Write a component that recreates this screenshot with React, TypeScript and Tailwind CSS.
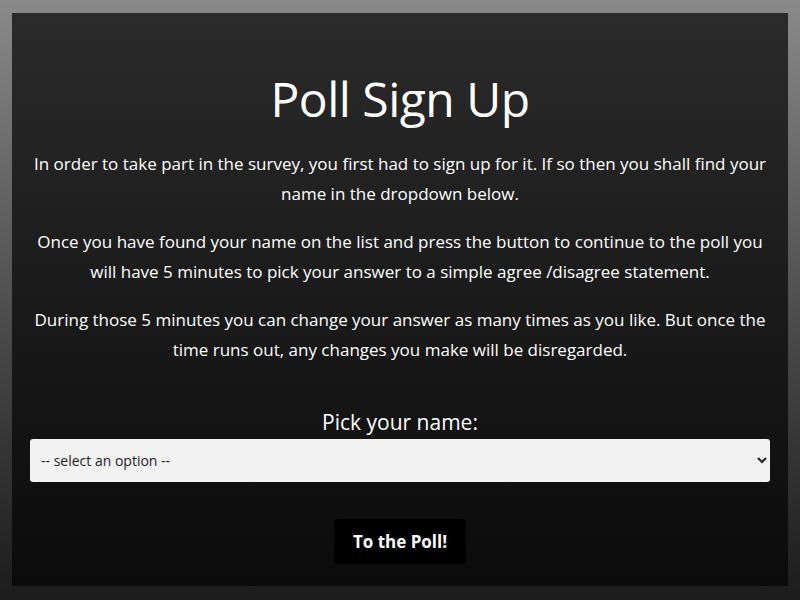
export default function App() {
  return (
    <div className="min-h-screen bg-gradient-to-b from-[#8a8a8a] to-[#1c1c1c] px-[12px] pt-[13px] pb-[14px] font-['Open_Sans',sans-serif] text-white">
      <div className="flex h-[573px] flex-col items-center bg-gradient-to-b from-[#2b2b2b] to-[#0b0b0b] px-[18px] pt-[56px]">
        <h1 className="text-[48px] leading-[60px] tracking-[-0.5px]">Poll Sign Up</h1>
        <div className="mt-[20px] flex flex-col gap-[18px] text-center text-[17px] leading-[30px]">
          <p>
            In order to take part in the survey, you first had to sign up for it. If so then you shall find your
            name in the dropdown below.
          </p>
          <p>
            Once you have found your name on the list and press the button to continue to the poll you will have 5
            minutes to pick your answer to a simple agree /disagree statement.
          </p>
          <p>
            During those 5 minutes you can change your answer as many times as you like. But once the time runs out,
            any changes you make will be disregarded.
          </p>
        </div>
        <label className="mt-[42px] text-[21px] leading-[30px]">Pick your name:</label>
        <select className="mt-[2px] h-[43px] w-full rounded-[3px] bg-[#f2f2f2] pl-[7px] pr-[6px] text-[14px] text-[#222]">
          <option>-- select an option --</option>
        </select>
        <button className="mt-[37px] h-[45px] rounded-[4px] bg-black px-[19px] text-[17px] font-bold">
          To the Poll!
        </button>
      </div>
    </div>
  );
}
